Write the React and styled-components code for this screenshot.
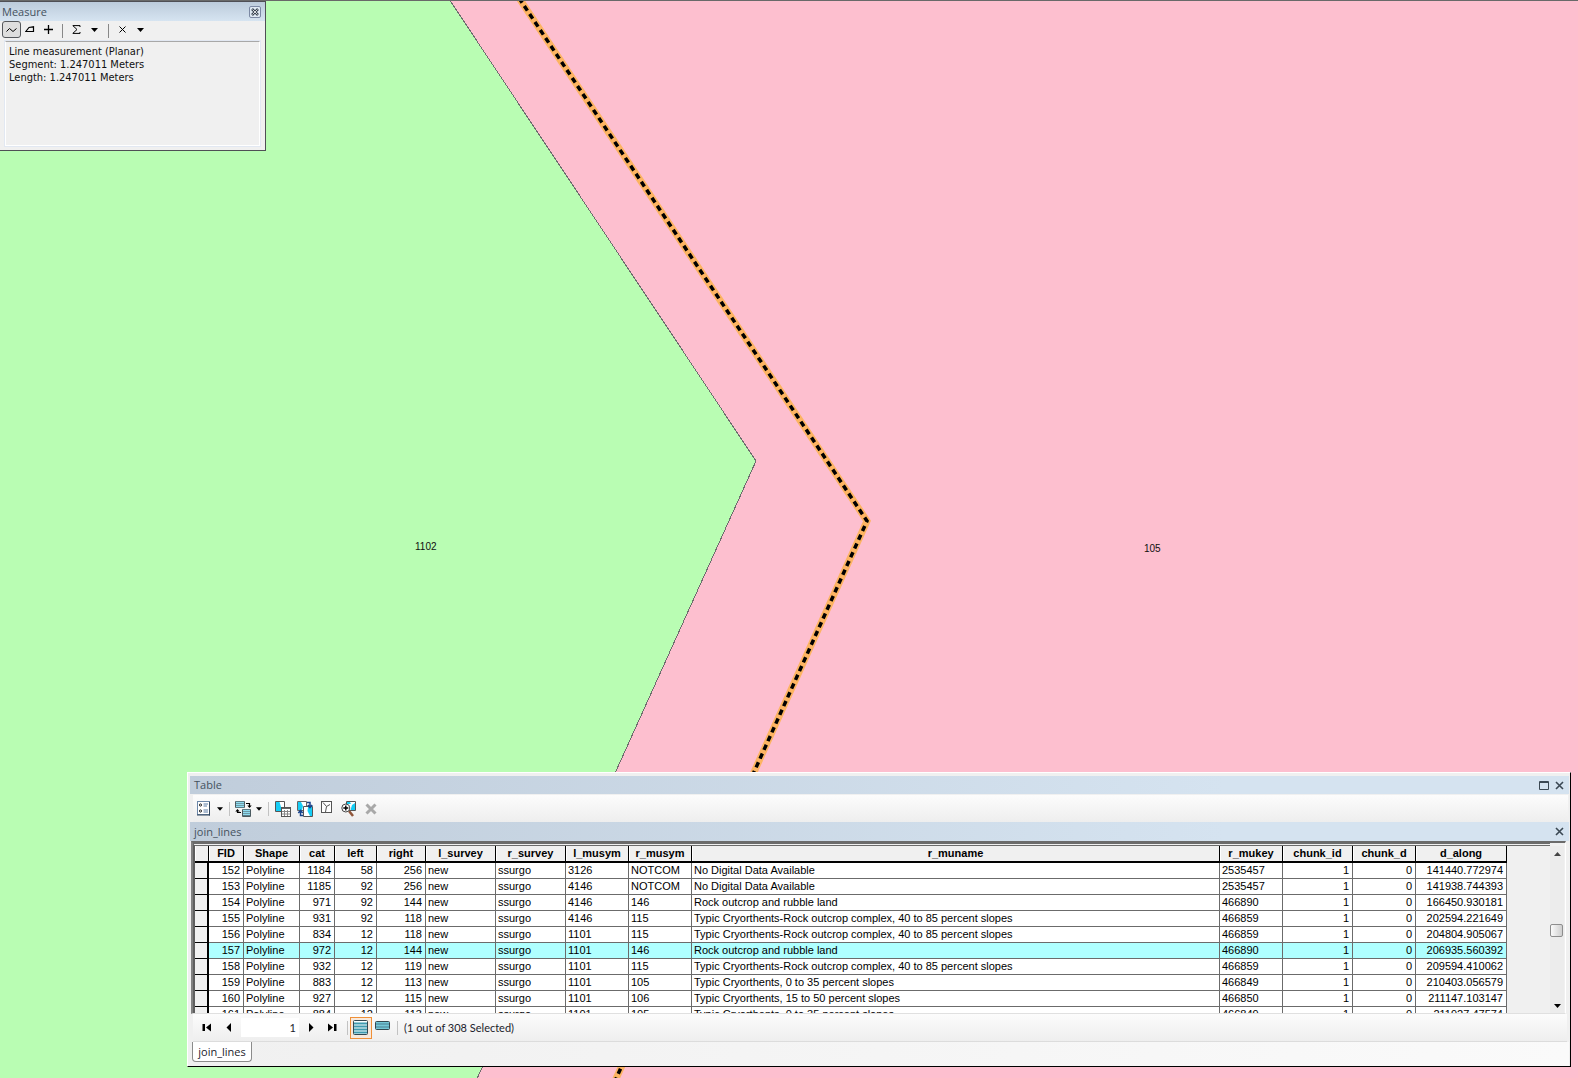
import React from "react";
import styled, { createGlobalStyle } from "styled-components";

const GlobalStyle = createGlobalStyle`
  *, *::before, *::after { box-sizing: border-box; }
  body { margin: 0; background: #fdbfcf; font-family: "Liberation Sans", Arial, sans-serif; }
  button, input { font: inherit; color: inherit; margin: 0; padding: 0; border: 0; background: none; }
`;

const humanist = `"Open Sans", "Noto Sans", sans-serif`;

const Desktop = styled.main`
  position: relative;
  height: 100vh;
  overflow: hidden;
  border-top: 1px solid #696969;
`;

const MapCanvas = styled.svg`
  display: block;
  width: 100%;
  height: 100%;
`;

const MapLabel = styled.text`
  font: 10px "Liberation Sans", Arial, sans-serif;
  fill: #101010;
`;

/* Measure window */

const MeasureWindow = styled.section`
  position: absolute;
  top: 0;
  left: 0;
  width: 266px;
  height: 150px;
  display: flex;
  flex-direction: column;
  background: #f0f0f0;
  border: solid #4f4f55;
  border-width: 1px 1px 1px 0;
`;

const MeasureTitle = styled.header`
  display: flex;
  align-items: center;
  justify-content: space-between;
  height: 19px;
  padding: 0 4px 0 2px;
  background: linear-gradient(#bccbdb, #d6e4f1);
  color: #45525e;
`;

const Heading = styled.h2`
  margin: 0;
  font: 11px/18px ${humanist};
`;

const MeasureClose = styled.button`
  display: grid;
  place-items: center;
  width: 12px;
  height: 12px;
  border: 1px solid #7c89a4;
  border-radius: 2px;
  background: #dfe9f3;
`;

const MeasureTools = styled.div`
  display: flex;
  align-items: flex-start;
  height: 20px;
  padding-left: 2px;
`;

const Tool = styled.button`
  display: grid;
  place-items: center;
  flex: none;
  width: ${(p) => p.$w || 18}px;
  height: ${(p) => p.$h || 17}px;
  border: 1px solid ${(p) => (p.$pressed ? "#55585c" : "transparent")};
  border-radius: 3px;
  background: ${(p) => (p.$pressed ? "#dedede" : "none")};
  svg { display: block; }
`;

const Divider = styled.span`
  flex: none;
  align-self: center;
  width: 1px;
  height: 14px;
  margin: 0 ${(p) => p.$gap || 5}px;
  background: ${(p) => p.$color || "#888"};
`;

const MeasureOutput = styled.div`
  flex: 1;
  margin: 0 5px 4px 5px;
  padding: 3px;
  border: 1px solid #fff;
  border-top-color: #a8a8a8;
  outline: 1px solid #e2e8f2;
  font: 11px/13px "DejaVu Sans Condensed", "DejaVu Sans", sans-serif;
  color: #101010;
  p { margin: 0; }
`;

/* Attribute table window */

const TableWindow = styled.section`
  position: absolute;
  left: 187px;
  right: 7px;
  bottom: 11px;
  padding: 3px 1px 0 2px;
  background: #f0f0f0;
  border: 1px solid #fff;
  border-right: 1px solid #000;
  border-bottom: 1px solid #000;
`;

const Bar = styled.header`
  display: flex;
  align-items: center;
  justify-content: space-between;
  height: ${(p) => p.$h}px;
  padding: 0 4px;
  background: linear-gradient(90deg, #c0cddb, #d5e3f0 75%);
  color: #45525e;
`;

const BarButtons = styled.div`
  display: flex;
  gap: 5px;
`;

const BarButton = styled.button`
  display: grid;
  place-items: center;
  width: 11px;
  height: 14px;
`;

const TableTools = styled.div`
  display: flex;
  align-items: center;
  height: 27px;
  margin: 1px 1px 0 3px;
  padding-left: 2px;
  background: linear-gradient(#fcfcfc, #eee);
`;

const GridFrame = styled.div`
  display: flex;
  height: 173px;
  margin: 0 3px 0 1px;
  border-top: 2px solid #6b6b6b;
  border-left: 2px solid #808080;
  border-right: 1px solid #fff;
  border-bottom: 1px solid #e0e0e0;
  background: #f0f0f0;
`;

const GridClip = styled.div`
  flex: 1;
  overflow: hidden;
  border-top: 3px double #6b6b6b;
  border-left: 2px solid #5e5e5e;
  padding-right: 43px;
`;

const DataTable = styled.table`
  table-layout: fixed;
  width: 100%;
  border-collapse: separate;
  border-spacing: 0;
  font-size: 11px;
  line-height: 15px;
  color: #000;
`;

const Col = styled.col`
  width: ${(p) => (p.$w ? `${p.$w}px` : "auto")};
`;

const HeadCell = styled.th`
  height: 17px;
  padding: 0;
  overflow: hidden;
  white-space: nowrap;
  font-weight: bold;
  text-align: center;
  background: #f0f0f0;
  border-right: 1px solid #000;
  border-bottom: 2px solid #000;
  box-shadow: inset 1px 0 #fff;
`;

const RowHandle = styled.th`
  height: 16px;
  padding: 0;
  background: #f0f0f0;
  border-right: 2px solid #000;
  border-bottom: 1px solid #000;
`;

const Row = styled.tr`
  background: ${(p) => (p.$selected ? "#afffff" : "#fff")};
`;

const Cell = styled.td`
  height: 16px;
  padding: 0 3px 0 2px;
  overflow: hidden;
  white-space: nowrap;
  text-align: ${(p) => (p.$right ? "right" : "left")};
  border-right: 1px solid #6b6b6b;
  border-bottom: 1px solid #6b6b6b;
`;

const ScrollTrack = styled.div`
  display: flex;
  flex-direction: column;
  justify-content: space-between;
  width: 14px;
  margin: 3px 1px 0 0;
  background: #ececec;
`;

const ScrollButton = styled.button`
  display: grid;
  place-items: center;
  height: 15px;
`;

const ScrollThumb = styled.button`
  width: 13px;
  height: 13px;
  margin-top: 2px;
  border: 1px solid #8d8d8d;
  border-radius: 2px;
  background: linear-gradient(90deg, #fafafa, #cfcfcf);
`;

const NavBar = styled.nav`
  display: flex;
  align-items: center;
  height: 28px;
  margin: 0 2px 0 3px;
  padding-left: 2px;
  background: linear-gradient(#fcfcfc, #eee);
  border-bottom: 1px solid #dcdcdc;
  font: 11px/18px Lato, sans-serif;
  color: #1c1c2c;
`;

const RecordInput = styled.input`
  width: 58px;
  height: 19px;
  margin: 0 3px 0 2px;
  padding-right: 3px;
  background: #fff;
  text-align: right;
`;

const ViewButton = styled.button`
  display: grid;
  place-items: center;
  width: 22px;
  height: 22px;
  border: 1px solid ${(p) => (p.$active ? "#ef9038" : "transparent")};
  background: ${(p) => (p.$active ? "#f8e9dc" : "none")};
`;

const Status = styled.output`
  margin-left: 3px;
`;

const TabStrip = styled.div`
  height: 24px;
  padding-left: 2px;
  background: linear-gradient(90deg, #f0f0f0, #fafafa);
`;

const Tab = styled.button`
  display: block;
  height: 20px;
  width: 60px;
  border: 1px solid #8b8b8b;
  border-top: 0;
  border-radius: 0 0 4px 4px;
  background: #fff;
  color: #1c1c2c;
  font: 11px/18px ${humanist};
`;

const Caret = ({ w = 7 }) => (
  <svg width={w} height="4" viewBox="0 0 7 4">
    <path d="M0 0H7L3.5 4Z" fill="#000" />
  </svg>
);

const Cross = () => (
  <svg width="9" height="9" viewBox="0 0 9 9" stroke="#3b4853" strokeWidth="1.6">
    <path d="M1 1L8 8M8 1L1 8" />
  </svg>
);

const Arrow = ({ back, bar }) => (
  <svg width="9" height="9" viewBox="0 0 9 9" transform={back ? "scale(-1 1)" : undefined}>
    {bar ? <path d="M0 .5L5 4.5L0 8.5ZM6 1H8.5V8H6Z" /> : <path d="M2 0L6.5 4.5L2 9Z" />}
  </svg>
);

const OptionsIcon = () => (
  <svg width="14" height="15" viewBox="0 0 14 15">
    <rect x=".5" y=".5" width="12" height="13" fill="#fff" stroke="#6c87a8" />
    <path d="M12.5 1V14.5M0 14H13" fill="none" stroke="#33475e" />
    <g fill="#fff" stroke="#222">
      <circle cx="3.5" cy="4" r="1.1" />
      <circle cx="3.5" cy="10" r="1.1" />
    </g>
    <path d="M6.5 3H11M6.5 5H10M6.5 9H11M6.5 11H11" stroke="#5c7da6" />
  </svg>
);

const RelatedIcon = () => (
  <svg width="17" height="16" viewBox="0 0 17 16">
    <rect x="0" y="0" width="10" height="7" rx="1" fill="#4a5a60" />
    <path d="M1 1.5H9M1 3.5H9M1 5.5H9" stroke="#8fdcf0" strokeWidth="1.3" />
    <rect x="7" y="8" width="9" height="8" rx="1" fill="#4a5a60" />
    <path d="M8 9.5H15M8 11.5H15M8 13.5H15" stroke="#8fdcf0" strokeWidth="1.3" />
    <path d="M11 2.5H14.5V5M6 11.5H2.5V10" fill="none" stroke="#000" strokeWidth="1.2" />
    <path d="M12.3 4.5H16.7L14.5 7ZM.3 10.5H4.7L2.5 8Z" />
  </svg>
);

const SelectIcon = () => (
  <svg width="16" height="16" viewBox="0 0 16 16">
    <path d="M.5.5H9.5V10.5H.5Z" fill="#fff" stroke="#555" />
    <path d="M1 1H4.500L6 6L9 8V10H1Z" fill="#16cdf5" />
    <rect x="6.5" y="6.5" width="9" height="9" fill="#fff" stroke="#555" />
    <path d="M7 7.5H15" stroke="#666" />
    <path d="M7 10.5H15M7 13H15M9.5 9V15M12.5 9V15" stroke="#888" />
  </svg>
);

const SwitchIcon = () => (
  <svg width="17" height="16" viewBox="0 0 17 16">
    <path d="M.5.5H9.5V9.5H.5Z" fill="#fff" stroke="#666" />
    <path d="M1 1H4L6 5L5 9H1Z" fill="#16cdf5" />
    <path d="M6.5 5.500H15.500V15.500H6.500Z" fill="#fff" stroke="#555" />
    <path d="M11 6H15V15H13L10.500 10Z" fill="#16cdf5" />
    <path d="M10 1.500H13V6M10.800 4L13 6.500L15.200 4M6 14.500H3.500V10M1.300 12L3.500 9.500L5.700 12" fill="none" stroke="#17428c" strokeWidth="1.5" />
  </svg>
);

const ClearIcon = () => (
  <svg width="12" height="16" viewBox="0 0 12 16">
    <rect x=".5" y=".5" width="10" height="11" fill="#fff" stroke="#555" />
    <path d="M2 1.5L5.5 5.500L9 3.500M5.500 5.500L4.500 11" fill="none" stroke="#555" />
  </svg>
);

const ZoomIcon = () => (
  <svg width="16" height="16" viewBox="0 0 16 16">
    <path d="M5.5.5H14.5V9.5H5.5Z" fill="#fff" stroke="#555" />
    <path d="M6 1H9L10 3H6ZM11 4L14 2V9H9.500Z" fill="#16cdf5" />
    <path d="M8 10L12 15" stroke="#91563a" strokeWidth="2.5" />
    <circle cx="4.8" cy="7" r="4" fill="#fff" stroke="#444" />
    <path d="M2.300 7H7.300M4.800 4.500V9.500" stroke="#000" strokeWidth="1.4" />
  </svg>
);

const DeleteIcon = () => (
  <svg width="12" height="12" viewBox="0 0 12 12" stroke="#a8a8a8" strokeWidth="3">
    <path d="M1.5 1.5L10.5 10.5M10.5 1.5L1.5 10.5" />
  </svg>
);

const RowsIcon = ({ short }) =>
  short ? (
    <svg width="16" height="16" viewBox="0 0 16 16">
      <rect x=".5" y="1.5" width="14" height="8" rx="1" fill="#74c8d8" stroke="#344850" />
      <path d="M1 4H14M1 7H14" stroke="#4a7f91" />
    </svg>
  ) : (
    <svg width="16" height="16" viewBox="0 0 16 16">
      <rect x=".5" y=".5" width="14" height="14" rx="1" fill="#f7ffff" stroke="#344850" />
      <path d="M1 3.5H14M1 6.5H14M1 9.5H14M1 12.5H14" stroke="#3f9aae" strokeWidth="1.8" />
    </svg>
  );

const columns = [
  { name: "FID", w: 35, right: true },
  { name: "Shape", w: 56 },
  { name: "cat", w: 35, right: true },
  { name: "left", w: 42, right: true },
  { name: "right", w: 49, right: true },
  { name: "l_survey", w: 70 },
  { name: "r_survey", w: 70 },
  { name: "l_musym", w: 63 },
  { name: "r_musym", w: 63 },
  { name: "r_muname" },
  { name: "r_mukey", w: 63 },
  { name: "chunk_id", w: 70, right: true },
  { name: "chunk_d", w: 63, right: true },
  { name: "d_along", w: 91, right: true },
];

const complex = "Typic Cryorthents-Rock outcrop complex, 40 to 85 percent slopes";
const rock = "Rock outcrop and rubble land";
const noData = "No Digital Data Available";

const rows = [
  [152, "Polyline", 1184, 58, 256, "new", "ssurgo", "3126", "NOTCOM", noData, "2535457", 1, 0, "141440.772974"],
  [153, "Polyline", 1185, 92, 256, "new", "ssurgo", "4146", "NOTCOM", noData, "2535457", 1, 0, "141938.744393"],
  [154, "Polyline", 971, 92, 144, "new", "ssurgo", "4146", "146", rock, "466890", 1, 0, "166450.930181"],
  [155, "Polyline", 931, 92, 118, "new", "ssurgo", "4146", "115", complex, "466859", 1, 0, "202594.221649"],
  [156, "Polyline", 834, 12, 118, "new", "ssurgo", "1101", "115", complex, "466859", 1, 0, "204804.905067"],
  [157, "Polyline", 972, 12, 144, "new", "ssurgo", "1101", "146", rock, "466890", 1, 0, "206935.560392"],
  [158, "Polyline", 932, 12, 119, "new", "ssurgo", "1101", "115", complex, "466859", 1, 0, "209594.410062"],
  [159, "Polyline", 883, 12, 113, "new", "ssurgo", "1101", "105", "Typic Cryorthents, 0 to 35 percent slopes", "466849", 1, 0, "210403.056579"],
  [160, "Polyline", 927, 12, 115, "new", "ssurgo", "1101", "106", "Typic Cryorthents, 15 to 50 percent slopes", "466850", 1, 0, "211147.103147"],
  [161, "Polyline", 884, 12, 113, "new", "ssurgo", "1101", "105", "Typic Cryorthents, 0 to 35 percent slopes", "466849", 1, 0, "211927.47574"],
];

function SoilMap() {
  const join = "M519 -3L867 520L615 1080";
  return (
    <MapCanvas viewBox="0 0 1578 1077" preserveAspectRatio="xMinYMin slice" role="img" aria-label="Soil map">
      <rect width="1578" height="1077" fill="#fdbfcf" />
      <path d="M-2 -2H449L756 460L476 1080H-2Z" fill="#b9fdb3" stroke="#6e6e6e" shapeRendering="crispEdges" />
      <path d={join} fill="none" stroke="#fdb462" strokeWidth="7" />
      <path d={join} fill="none" stroke="#000" strokeWidth="3.5" strokeDasharray="5.6 4" />
      <MapLabel x="415" y="549">1102</MapLabel>
      <MapLabel x="1144" y="551">105</MapLabel>
    </MapCanvas>
  );
}

function Measure() {
  return (
    <MeasureWindow>
      <MeasureTitle>
        <Heading>Measure</Heading>
        <MeasureClose aria-label="Close">
          <svg width="8" height="8" viewBox="0 0 8 8">
            <path d="M1 1L7 7M7 1L1 7" stroke="#3b4654" strokeWidth="2.6" />
            <path d="M1.5 1.5L6.5 6.5M6.5 1.5L1.5 6.5" stroke="#fff" strokeWidth=".8" />
          </svg>
        </MeasureClose>
      </MeasureTitle>
      <MeasureTools>
        <Tool $pressed $w={19} aria-label="Measure line">
          <svg width="11" height="6" viewBox="0 0 11 6">
            <path d="M.5 4.5L3.5 1.5L7 4.5L10.5 1.5" fill="none" stroke="#000" />
          </svg>
        </Tool>
        <Tool aria-label="Measure area">
          <svg width="10" height="7" viewBox="0 0 10 7">
            <path d="M.8 5.5L4 1.5L8.5 .8V5.5Z" fill="none" stroke="#000" strokeWidth="1.2" />
          </svg>
        </Tool>
        <Tool $w={19} aria-label="Measure feature">
          <svg width="9" height="9" viewBox="0 0 9 9">
            <path d="M0 4.5H9M4.5 0V9" stroke="#000" strokeWidth="1.3" />
          </svg>
        </Tool>
        <Divider $gap={4} />
        <Tool aria-label="Show total">
          <svg width="9" height="9" viewBox="0 0 9 9">
            <path d="M8 2V.6H.8L5 4.5L.8 8.4H8V7" fill="none" stroke="#000" />
          </svg>
        </Tool>
        <Tool $w={19} aria-label="Total options"><Caret /></Tool>
        <Divider $gap={4} />
        <Tool aria-label="Choose units">
          <svg width="7" height="7" viewBox="0 0 7 7">
            <path d="M.5.5L6.5 6.5M6.5.5L.5 6.5" stroke="#000" />
          </svg>
        </Tool>
        <Tool $w={19} aria-label="Unit options"><Caret /></Tool>
      </MeasureTools>
      <MeasureOutput>
        <p>Line measurement (Planar)</p>
        <p>Segment: 1.247011 Meters</p>
        <p>Length: 1.247011 Meters</p>
      </MeasureOutput>
    </MeasureWindow>
  );
}

function AttributeTable() {
  return (
    <TableWindow>
      <Bar $h={18}>
        <Heading>Table</Heading>
        <BarButtons>
          <BarButton aria-label="Maximize">
            <svg width="10" height="9" viewBox="0 0 10 9">
              <path d="M.5.5H9.5V8.5H.5ZM.5 1.5H9.5" fill="none" stroke="#3b4853" />
            </svg>
          </BarButton>
          <BarButton aria-label="Close window"><Cross /></BarButton>
        </BarButtons>
      </Bar>
      <TableTools>
        <Tool $h={20} aria-label="Table options"><OptionsIcon /></Tool>
        <Tool $w={13} $h={20} aria-label="More table options"><Caret w={6} /></Tool>
        <Divider $gap={3} $color="#c2c2c2" />
        <Tool $w={20} $h={20} aria-label="Related tables"><RelatedIcon /></Tool>
        <Tool $w={12} $h={20} aria-label="More related tables"><Caret w={6} /></Tool>
        <Divider $gap={3} $color="#c2c2c2" />
        <Tool $w={22} $h={20} aria-label="Select by attributes"><SelectIcon /></Tool>
        <Tool $w={22} $h={20} aria-label="Switch selection"><SwitchIcon /></Tool>
        <Tool $w={22} $h={20} aria-label="Clear selection"><ClearIcon /></Tool>
        <Tool $w={22} $h={20} aria-label="Zoom to selected"><ZoomIcon /></Tool>
        <Tool $w={22} $h={20} aria-label="Delete selected"><DeleteIcon /></Tool>
      </TableTools>
      <Bar $h={19}>
        <Heading>join_lines</Heading>
        <BarButton aria-label="Close table"><Cross /></BarButton>
      </Bar>
      <GridFrame>
        <GridClip>
          <DataTable>
            <colgroup>
              <Col $w={14} />
              {columns.map((c) => <Col key={c.name} $w={c.w} />)}
            </colgroup>
            <thead>
              <tr>
                <HeadCell aria-label="Row" />
                {columns.map((c) => <HeadCell key={c.name} scope="col">{c.name}</HeadCell>)}
              </tr>
            </thead>
            <tbody>
              {rows.map((r) => (
                <Row key={r[0]} $selected={r[0] === 157}>
                  <RowHandle scope="row" aria-label={`Row ${r[0]}`} />
                  {r.map((v, i) => <Cell key={columns[i].name} $right={columns[i].right}>{v}</Cell>)}
                </Row>
              ))}
            </tbody>
          </DataTable>
        </GridClip>
        <ScrollTrack>
          <ScrollButton aria-label="Scroll up">
            <svg width="7" height="4" viewBox="0 0 7 4"><path d="M0 4H7L3.5 0Z" fill="#444" /></svg>
          </ScrollButton>
          <ScrollThumb aria-label="Scroll position" />
          <ScrollButton aria-label="Scroll down"><Caret /></ScrollButton>
        </ScrollTrack>
      </GridFrame>
      <NavBar aria-label="Records">
        <Tool $w={22} $h={20} aria-label="First record"><Arrow back bar /></Tool>
        <Tool $w={22} $h={20} aria-label="Previous record"><Arrow back /></Tool>
        <RecordInput aria-label="Record number" defaultValue="1" />
        <Tool $w={18} $h={20} aria-label="Next record"><Arrow /></Tool>
        <Tool $w={25} $h={20} aria-label="Last record"><Arrow bar /></Tool>
        <Divider $gap={2} $color="#c2c2c2" />
        <ViewButton $active aria-label="Show all records"><RowsIcon /></ViewButton>
        <ViewButton aria-label="Show selected records"><RowsIcon short /></ViewButton>
        <Divider $gap={3} $color="#c2c2c2" />
        <Status>(1 out of 308 Selected)</Status>
      </NavBar>
      <TabStrip>
        <Tab>join_lines</Tab>
      </TabStrip>
    </TableWindow>
  );
}

export default function App() {
  return (
    <>
      <GlobalStyle />
      <Desktop>
        <SoilMap />
        <Measure />
        <AttributeTable />
      </Desktop>
    </>
  );
}
